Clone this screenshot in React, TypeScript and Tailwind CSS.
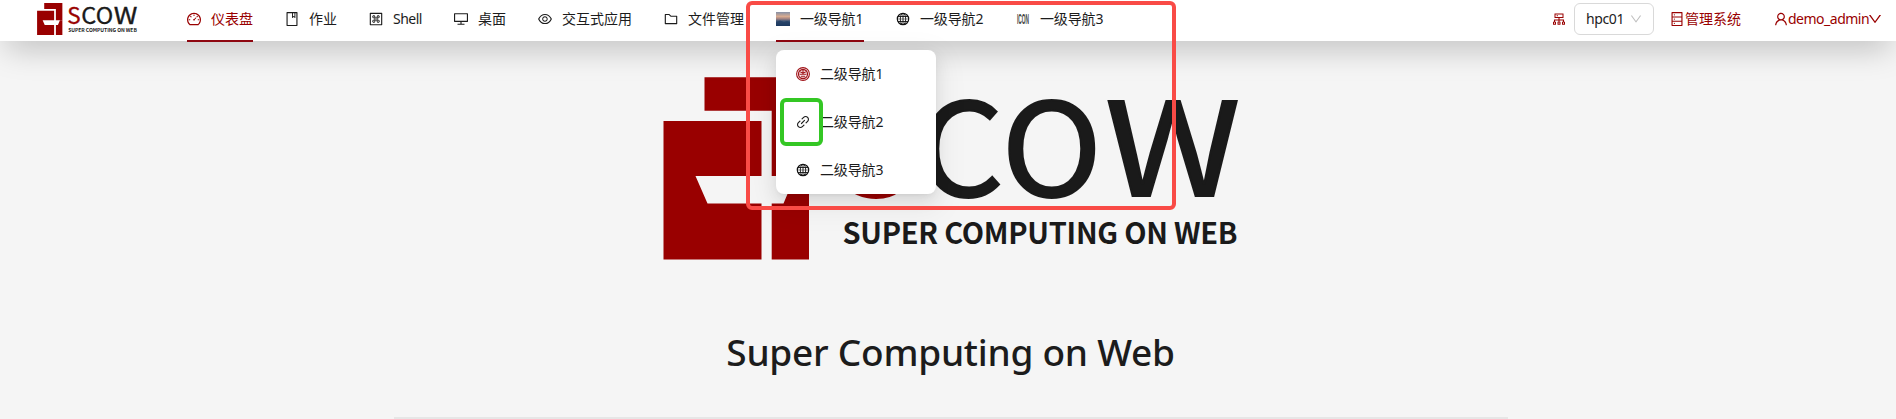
import type { ReactNode } from "react";
import {
  AiOutlineDashboard, AiOutlineBook, AiOutlineMacCommand, AiOutlineDesktop, AiOutlineEye,
  AiOutlineFolder, AiOutlineLink, AiOutlineDatabase, AiOutlineUser, AiOutlineDown, AiOutlineCluster,
} from "react-icons/ai";

// Trims the icon set's built-in margin so glyphs fill their box.
const VB = "64 64 896 896";

function Logo({ className }: { className: string }) {
  return (
    <svg viewBox="663 77 575.5 183" preserveAspectRatio="none" className={`overflow-visible ${className}`}>
      <g fill="#990000">
        <path d="M704.5 77.3H809V176H771.7V110.7H704.5Z" />
        <path d="M663.5 121H761.5V176H695.5L707.5 203.5H761.5V259.5H663.5Z" />
        <path d="M795 176H809V259.5H771.7V203.5H783.5Z" />
      </g>
      <g fontFamily="'Noto Sans CJK SC', sans-serif" fill="#1a1a1a">
        <g fontSize="129" stroke="#1a1a1a" strokeWidth="2">
          <text transform="translate(837 196.3)" fill="#990000" stroke="#990000">S</text>
          <text transform="translate(917.5 196.3) scale(1.05 1)">C</text>
          <text transform="translate(1001.5 196.3) scale(1.05 1)">O</text>
          <text transform="translate(1104.7 196.3) scale(1.2 1)">W</text>
        </g>
        <text x="842.5" y="243.6" fontSize="29" fontWeight="700" textLength="395">SUPER COMPUTING ON WEB</text>
      </g>
    </svg>
  );
}

function SunsetIcon() {
  return (
    <svg viewBox="0 0 14 14" className="size-3.5">
      <defs>
        <linearGradient id="sky" x1="0" y1="0" x2="0" y2="1">
          <stop offset="0" stopColor="#8590a6" />
          <stop offset=".32" stopColor="#d8ab90" />
          <stop offset=".5" stopColor="#9c7f80" />
          <stop offset=".64" stopColor="#40597a" />
          <stop offset="1" stopColor="#1d3b60" />
        </linearGradient>
      </defs>
      <rect width="14" height="14" fill="url(#sky)" />
      <path d="M0 10L4 8.5L8 10L11 9L14 10V14H0Z" fill="#1d3860" opacity=".6" />
    </svg>
  );
}

function Globe() {
  return (
    <svg viewBox="0 0 14 14" className="size-3.5" fill="none" stroke="#111" strokeWidth=".9">
      <circle cx="7" cy="7" r="5.7" strokeWidth="1.2" />
      <ellipse cx="7" cy="7" rx="2.7" ry="5.7" />
      <path d="M7 1.4V12.6M1.8 4.5H12.2M1.8 9.5H12.2" />
      <path d="M1.4 7H12.6" strokeWidth=".5" />
    </svg>
  );
}

function Seal() {
  return (
    <svg viewBox="0 0 14 14" className="size-3.5" fill="none" stroke="#a01218">
      <circle cx="7" cy="7" r="6.4" strokeWidth="1.1" />
      <circle cx="7" cy="7" r="4.5" strokeWidth="1.3" />
      <path d="M4.2 4.8L7 6.2L9.8 4.8M3.6 7.3H10.4M4.7 9.3H9.3M7 3V6" strokeWidth="1.1" />
    </svg>
  );
}

function IconWord() {
  return (
    <svg viewBox="0 0 14 14" className="size-3.5 overflow-visible">
      <text x="1" y="12" textLength="12" lengthAdjust="spacingAndGlyphs" fontSize="14.5" fontWeight="700" fontFamily="'Liberation Sans', sans-serif" fill="#444">ICON</text>
    </svg>
  );
}

type Item = { label: string; width: string; icon: ReactNode; active?: boolean; red?: boolean };
const items: Item[] = [
  { label: "仪表盘", width: "w-[42px]", icon: <AiOutlineDashboard viewBox={VB} />, active: true, red: true },
  { label: "作业", width: "w-[28px]", icon: <AiOutlineBook viewBox={VB} /> },
  { label: "Shell", width: "w-[29px] tracking-[-0.5px]", icon: <AiOutlineMacCommand viewBox={VB} /> },
  { label: "桌面", width: "w-[28px]", icon: <AiOutlineDesktop viewBox={VB} /> },
  { label: "交互式应用", width: "w-[70px]", icon: <AiOutlineEye viewBox={VB} /> },
  { label: "文件管理", width: "w-[56px]", icon: <AiOutlineFolder viewBox={VB} /> },
  { label: "一级导航1", width: "w-[64px] tracking-[-0.15px]", icon: <SunsetIcon />, active: true },
  { label: "一级导航2", width: "w-[64px] tracking-[-0.15px]", icon: <Globe /> },
  { label: "一级导航3", width: "w-[64px] tracking-[-0.15px]", icon: <IconWord /> },
];
const subItems = [
  { label: "二级导航1", icon: <Seal /> },
  { label: "二级导航2", icon: <AiOutlineLink viewBox={VB} /> },
  { label: "二级导航3", icon: <Globe /> },
];

export default function App() {
  return (
    <div className="relative h-[419px] w-full overflow-hidden bg-[#f5f5f5] font-['Noto_Sans','Noto_Sans_CJK_SC',sans-serif] text-sm text-[#1c1c1c]">
      <header className="relative flex h-[41px] bg-white pl-[37px] pr-[14px] shadow-[0_12px_32px_-6px_rgba(0,0,0,0.25)]">
        <Logo className="mt-[3px] h-8 w-[100px]" />
        <nav className="ml-[34px] flex h-[42px] shrink-0">
          {items.map((it) => (
            <div key={it.label} className="flex px-4">
              <div className={`flex h-[42px] items-center gap-2.5 border-b-2 pb-[3px] ${it.active ? "border-[#8e0610]" : "border-transparent"} ${it.red ? "text-[#990000]" : ""}`}>
                <span className="size-3.5">{it.icon}</span>
                <span className={`whitespace-nowrap leading-[22px] ${it.width}`}>{it.label}</span>
              </div>
            </div>
          ))}
        </nav>
        <div className="ml-auto flex h-[38px] items-center text-[#990000]">
          <AiOutlineCluster viewBox={VB} className="size-3.5" />
          <div className="ml-2 flex h-8 w-20 items-center justify-between rounded-md border border-[#d9d9d9] pl-[11px] pr-[11px] text-[#1c1c1c]">
            <span className="tracking-[-0.4px]">hpc01</span>
            <AiOutlineDown viewBox={VB} className="size-3 text-[#bfbfbf]" />
          </div>
          <AiOutlineDatabase viewBox={VB} className="ml-4 size-3.5" />
          <span className="ml-px w-[89px]">管理系统</span>
          <AiOutlineUser viewBox={VB} className="size-3.5" />
          <span className="w-[80px] whitespace-nowrap tracking-[-0.5px]">demo_admin</span>
          <AiOutlineDown viewBox={VB} className="size-3.5" />
        </div>
      </header>

      <main className="flex flex-col items-center">
        <Logo className="ml-[5.5px] mt-9 h-[183px] w-[575.5px]" />
        <h1 className="ml-[5px] mt-[65px] whitespace-nowrap text-[37px] font-medium leading-[54px] tracking-[-0.25px]">Super Computing on Web</h1>
        <div className="ml-[5px] mt-[38px] h-0.5 w-[1114px] bg-[#e6e6e6]" />
      </main>

      <div className="absolute left-[776px] top-[50px] h-36 w-40 rounded-lg bg-white shadow-[0_6px_16px_0_rgba(0,0,0,0.08),0_3px_6px_-4px_rgba(0,0,0,0.12),0_9px_28px_8px_rgba(0,0,0,0.05)]">
        {subItems.map((it) => (
          <div key={it.label} className="flex h-12 items-center gap-2.5 pl-5">
            <span className="size-3.5">{it.icon}</span>
            <span className="tracking-[-0.15px]">{it.label}</span>
          </div>
        ))}
      </div>
      <div className="absolute left-[746px] top-px h-[209px] w-[430px] rounded-md border-4 border-[#f94b46]" />
      <div className="absolute left-[780px] top-[98px] h-12 w-[43px] rounded-md border-4 border-[#34c724]" />
    </div>
  );
}
